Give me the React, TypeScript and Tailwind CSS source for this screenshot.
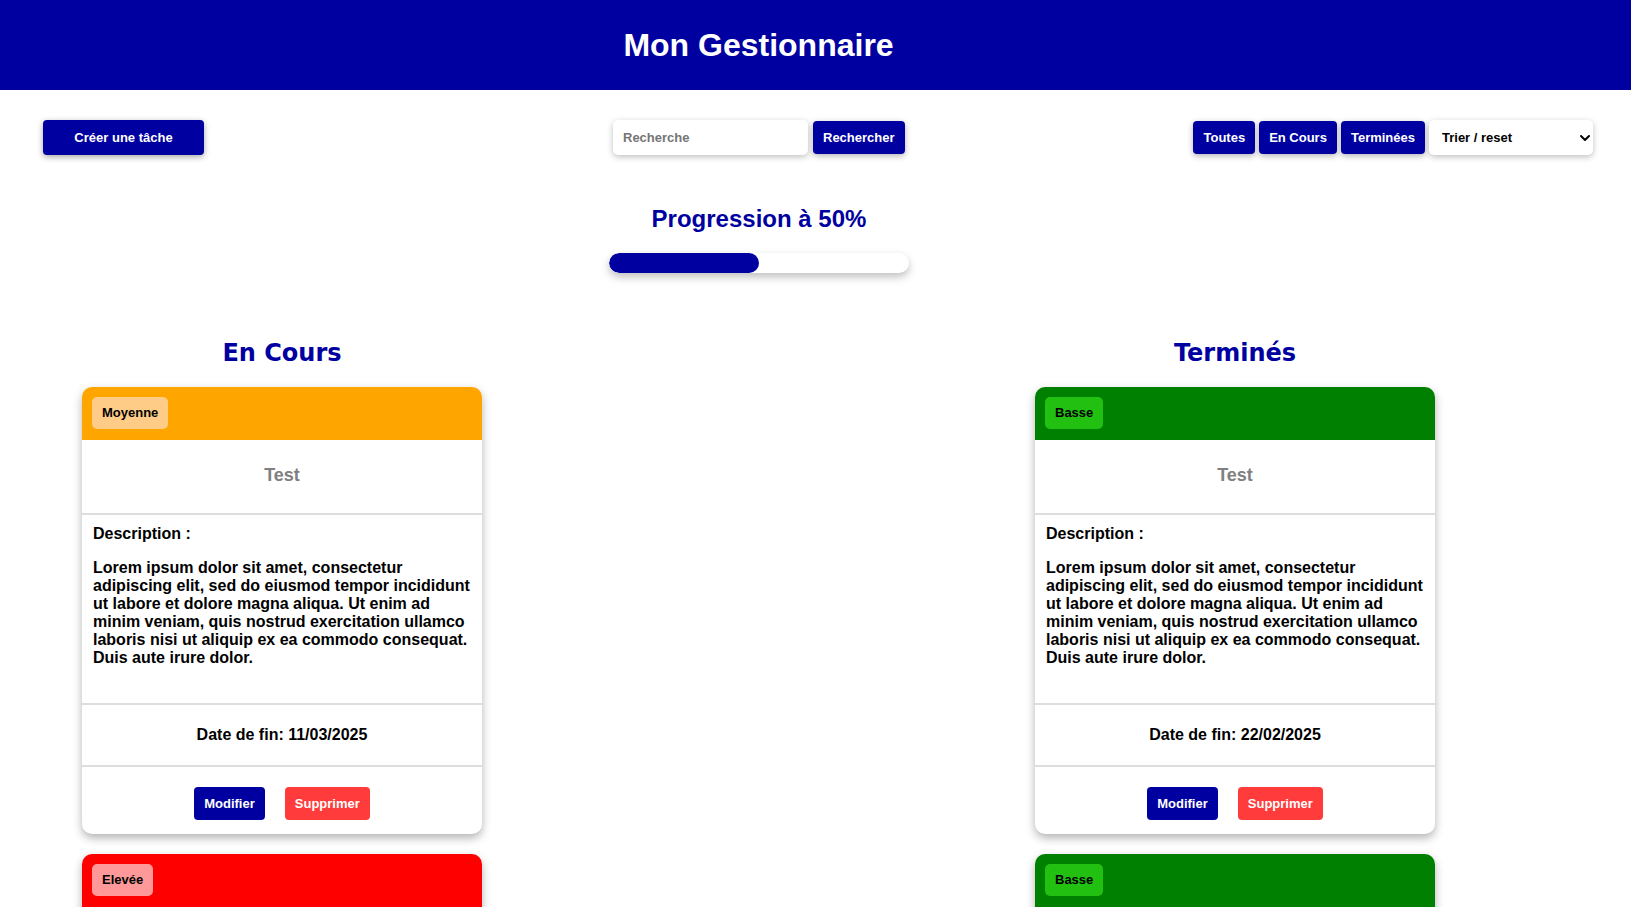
import React from "react";
import { ChevronDown } from "lucide-react";

const LOREM =
  "Lorem ipsum dolor sit amet, consectetur adipiscing elit, sed do eiusmod tempor incididunt ut labore et dolore magna aliqua. Ut enim ad minim veniam, quis nostrud exercitation ullamco laboris nisi ut aliquip ex ea commodo consequat. Duis aute irure dolor.";

type Prio = "Moyenne" | "Elevée" | "Basse";

const prioStyles: Record<Prio, { head: string; badge: string }> = {
  Moyenne: { head: "bg-[#ffa500]", badge: "bg-[#ffcc88]" },
  Elevée: { head: "bg-[#ff0000]", badge: "bg-[#ff9999]" },
  Basse: { head: "bg-[#008000]", badge: "bg-[#22c111]" },
};

function Card({ prio, date }: { prio: Prio; date: string }) {
  const s = prioStyles[prio];
  return (
    <div className="w-[400px] rounded-[10px] overflow-hidden bg-white shadow-[0_4px_10px_rgba(0,0,0,0.3)]">
      <div className={`h-[53px] px-[10px] pt-[10px] ${s.head}`}>
        <span
          className={`inline-flex h-[32px] items-center px-[10px] rounded-[5px] text-[13px] font-bold text-black ${s.badge}`}
        >
          {prio}
        </span>
      </div>
      <div className="h-[75px] flex items-center justify-center border-b-2 border-[#dddddd] pb-[2px]">
        <h3 className="text-[18px] leading-[21px] font-bold text-[#808080]">Test</h3>
      </div>
      <div className="px-[11px] pt-[10px] pb-[36px] border-b-2 border-[#dddddd]">
        <p className="text-[16px] leading-[18px] font-bold text-black">Description :</p>
        <p className="mt-[16px] text-[16px] leading-[18px] font-bold text-black">{LOREM}</p>
      </div>
      <div className="h-[62px] flex items-center justify-center border-b-2 border-[#dddddd]">
        <p className="text-[16px] leading-[18px] font-bold text-black">Date de fin: {date}</p>
      </div>
      <div className="pt-[20px] pb-[14px] flex justify-center gap-[20px]">
        <button className="h-[33px] px-[10px] rounded-[4px] bg-[#0000a0] text-white text-[13px] font-bold">
          Modifier
        </button>
        <button className="h-[33px] px-[10px] rounded-[4px] bg-[#ff3b3b] text-white text-[13px] font-bold">
          Supprimer
        </button>
      </div>
    </div>
  );
}

function Column({ title, cards }: { title: string; cards: { prio: Prio; date: string }[] }) {
  return (
    <div className="w-[400px] flex flex-col">
      <h2
        className="text-center text-[24px] leading-[28px] font-bold text-[#0000a0]"
        style={{ fontFamily: '"DejaVu Sans", sans-serif' }}
      >
        {title}
      </h2>
      <div className="mt-[20px] flex flex-col gap-[20px] pb-[30px]">
        {cards.map((c, i) => (
          <Card key={i} prio={c.prio} date={c.date} />
        ))}
      </div>
    </div>
  );
}

export default function App() {
  const btn =
    "h-[33px] px-[10px] rounded-[4px] bg-[#0000a0] text-white text-[13px] font-bold shadow-[0_2px_6px_rgba(0,0,0,0.3)]";
  return (
    <div
      className="min-h-screen bg-white"
      style={{ fontFamily: '"Liberation Sans", Arial, sans-serif' }}
    >
      <header className="h-[90px] bg-[#0000a0] flex items-center">
        <div className="w-[1517px] flex justify-center">
          <h1 className="text-[32px] leading-[36px] font-bold text-white">Mon Gestionnaire</h1>
        </div>
      </header>

      <div className="mt-[30px] h-[35px] flex items-center pl-[43px] pr-[38px]">
        <button className="h-[35px] w-[161px] rounded-[4px] bg-[#0000a0] text-white text-[13px] font-bold shadow-[0_2px_6px_rgba(0,0,0,0.35)]">
          Créer une tâche
        </button>
        <div className="ml-[409px] flex items-center gap-[5px]">
          <input
            placeholder="Recherche"
            className="h-[35px] w-[195px] rounded-[5px] bg-white px-[10px] text-[13px] font-bold text-black placeholder:text-[#757575] outline-none shadow-[0_2px_6px_rgba(0,0,0,0.25)]"
          />
          <button className={btn}>Rechercher</button>
        </div>
        <div className="ml-auto flex items-center gap-[4px]">
          <button className={`${btn} px-[9px]`}>Toutes</button>
          <button className={btn}>En Cours</button>
          <button className={btn}>Terminées</button>
          <div className="relative">
            <select className="appearance-none h-[35px] w-[164px] rounded-[5px] bg-white pl-[13px] text-[13px] font-bold text-black outline-none shadow-[0_2px_6px_rgba(0,0,0,0.25)]">
              <option>Trier / reset</option>
            </select>
            <ChevronDown
              size={16}
              strokeWidth={3}
              className="absolute right-[0px] top-[10px] text-black pointer-events-none"
            />
          </div>
        </div>
      </div>

      <div className="w-[1518px] flex flex-col items-center">
        <h2 className="mt-[50px] text-[24px] leading-[28px] font-bold text-[#0000a0]">
          Progression à 50%
        </h2>
        <div className="mt-[20px] h-[20px] w-[300px] rounded-full bg-white shadow-[0_4px_8px_rgba(0,0,0,0.25)] overflow-hidden">
          <div className="h-full rounded-full bg-[#0000a0]" style={{ width: "50%" }} />
        </div>
      </div>

      <div className="mt-[66px] flex pl-[82px] gap-[553px]">
        <Column
          title="En Cours"
          cards={[
            { prio: "Moyenne", date: "11/03/2025" },
            { prio: "Elevée", date: "15/03/2025" },
          ]}
        />
        <Column
          title="Terminés"
          cards={[
            { prio: "Basse", date: "22/02/2025" },
            { prio: "Basse", date: "01/03/2025" },
          ]}
        />
      </div>
    </div>
  );
}
